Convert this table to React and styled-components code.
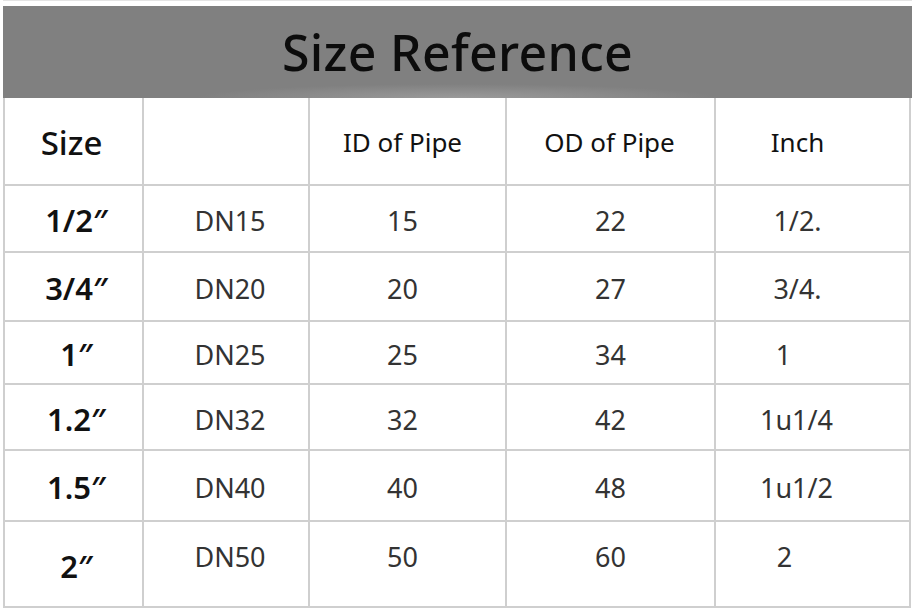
import React from 'react'
import styled, { createGlobalStyle } from 'styled-components'

const GlobalStyle = createGlobalStyle`
  html, body {
    margin: 0;
    padding: 0;
    background: #fff;
  }
  body {
    font-family: 'Noto Sans', 'Liberation Sans', sans-serif;
  }
`

const COLS = '139px 166px 197px 209px 195px'

// inchShift moves the inch value left of the column centre, as in the source sheet
const rows = [
  { size: '1/2″', dn: 'DN15', id: '15', od: '22', inch: '1/2.', inchShift: 30, h: 67 },
  { size: '3/4″', dn: 'DN20', id: '20', od: '27', inch: '3/4.', inchShift: 30, h: 69 },
  { size: '1″', dn: 'DN25', id: '25', od: '34', inch: '1', inchShift: 58, h: 63 },
  { size: '1.2″', dn: 'DN32', id: '32', od: '42', inch: '1u1/4', inchShift: 32, h: 66 },
  { size: '1.5″', dn: 'DN40', id: '40', od: '48', inch: '1u1/2', inchShift: 32, h: 71 },
  { size: '2″', dn: 'DN50', id: '50', od: '60', inch: '2', inchShift: 56, h: 86, lift: 20 }
]

const Page = () => (
  <Sheet>
    <Banner>
      <Title>Size Reference</Title>
    </Banner>
    <Table>
      <Row $h={88}>
        <HeadCell $big $right={4}>Size</HeadCell>
        <HeadCell />
        <HeadCell $right={10}>ID of Pipe</HeadCell>
        <HeadCell $right={2}>OD of Pipe</HeadCell>
        <HeadCell $right={30}>Inch</HeadCell>
      </Row>
      {rows.map(r => (
        <Row key={r.dn} $h={r.h}>
          <SizeCell>{r.size}</SizeCell>
          <Cell $lift={r.lift} $left={8}>{r.dn}</Cell>
          <Cell $lift={r.lift} $right={10}>{r.id}</Cell>
          <Cell $lift={r.lift}>{r.od}</Cell>
          <Cell $lift={r.lift} $right={r.inchShift}>{r.inch}</Cell>
        </Row>
      ))}
    </Table>
  </Sheet>
)

export default function App() {
  return (
    <>
      <GlobalStyle />
      <Page />
    </>
  )
}

const Sheet = styled.div`
  width: 909px;
  margin: 0 0 0 3px;
  padding-top: 5px;
  border-top: 1px solid #e4e4e4;
  box-sizing: border-box;
`

const Banner = styled.div`
  height: 92px;
  background: radial-gradient(ellipse 260px 14px at 50% 100%, #9a9a9a 0%, #808080 100%);
  display: flex;
  align-items: center;
  justify-content: center;
`

const Title = styled.h1`
  margin: 0;
  padding-top: 0;
  font-size: 50px;
  font-weight: 500;
  letter-spacing: 0.3px;
  color: #0c0c0c;
  line-height: 1;
`

const Table = styled.div`
  display: flex;
  flex-direction: column;
  border-left: 2px solid #cfcfcf;
  width: 908px;
`

const Row = styled.div`
  display: grid;
  grid-template-columns: ${COLS};
  height: ${props => props.$h}px;
`

const BaseCell = styled.div`
  box-sizing: border-box;
  border-right: 2px solid #cfcfcf;
  border-bottom: 2px solid #cfcfcf;
  display: flex;
  align-items: center;
  justify-content: center;
  line-height: 1;
  padding-left: ${props => props.$left || 0}px;
  padding-right: ${props => props.$right || 0}px;
`

const HeadCell = styled(BaseCell)`
  font-size: ${props => (props.$big ? '33px' : '26px')};
  font-weight: ${props => (props.$big ? 500 : 400)};
  color: #111;
  padding-top: 2px;
`

const SizeCell = styled(BaseCell)`
  font-size: 31px;
  font-weight: 600;
  color: #111;
  padding-left: 6px;
  padding-top: 4px;
`

const Cell = styled(BaseCell)`
  font-size: 27px;
  font-weight: 400;
  color: #333;
  padding-top: 4px;
  padding-bottom: ${props => props.$lift || 0}px;
`
